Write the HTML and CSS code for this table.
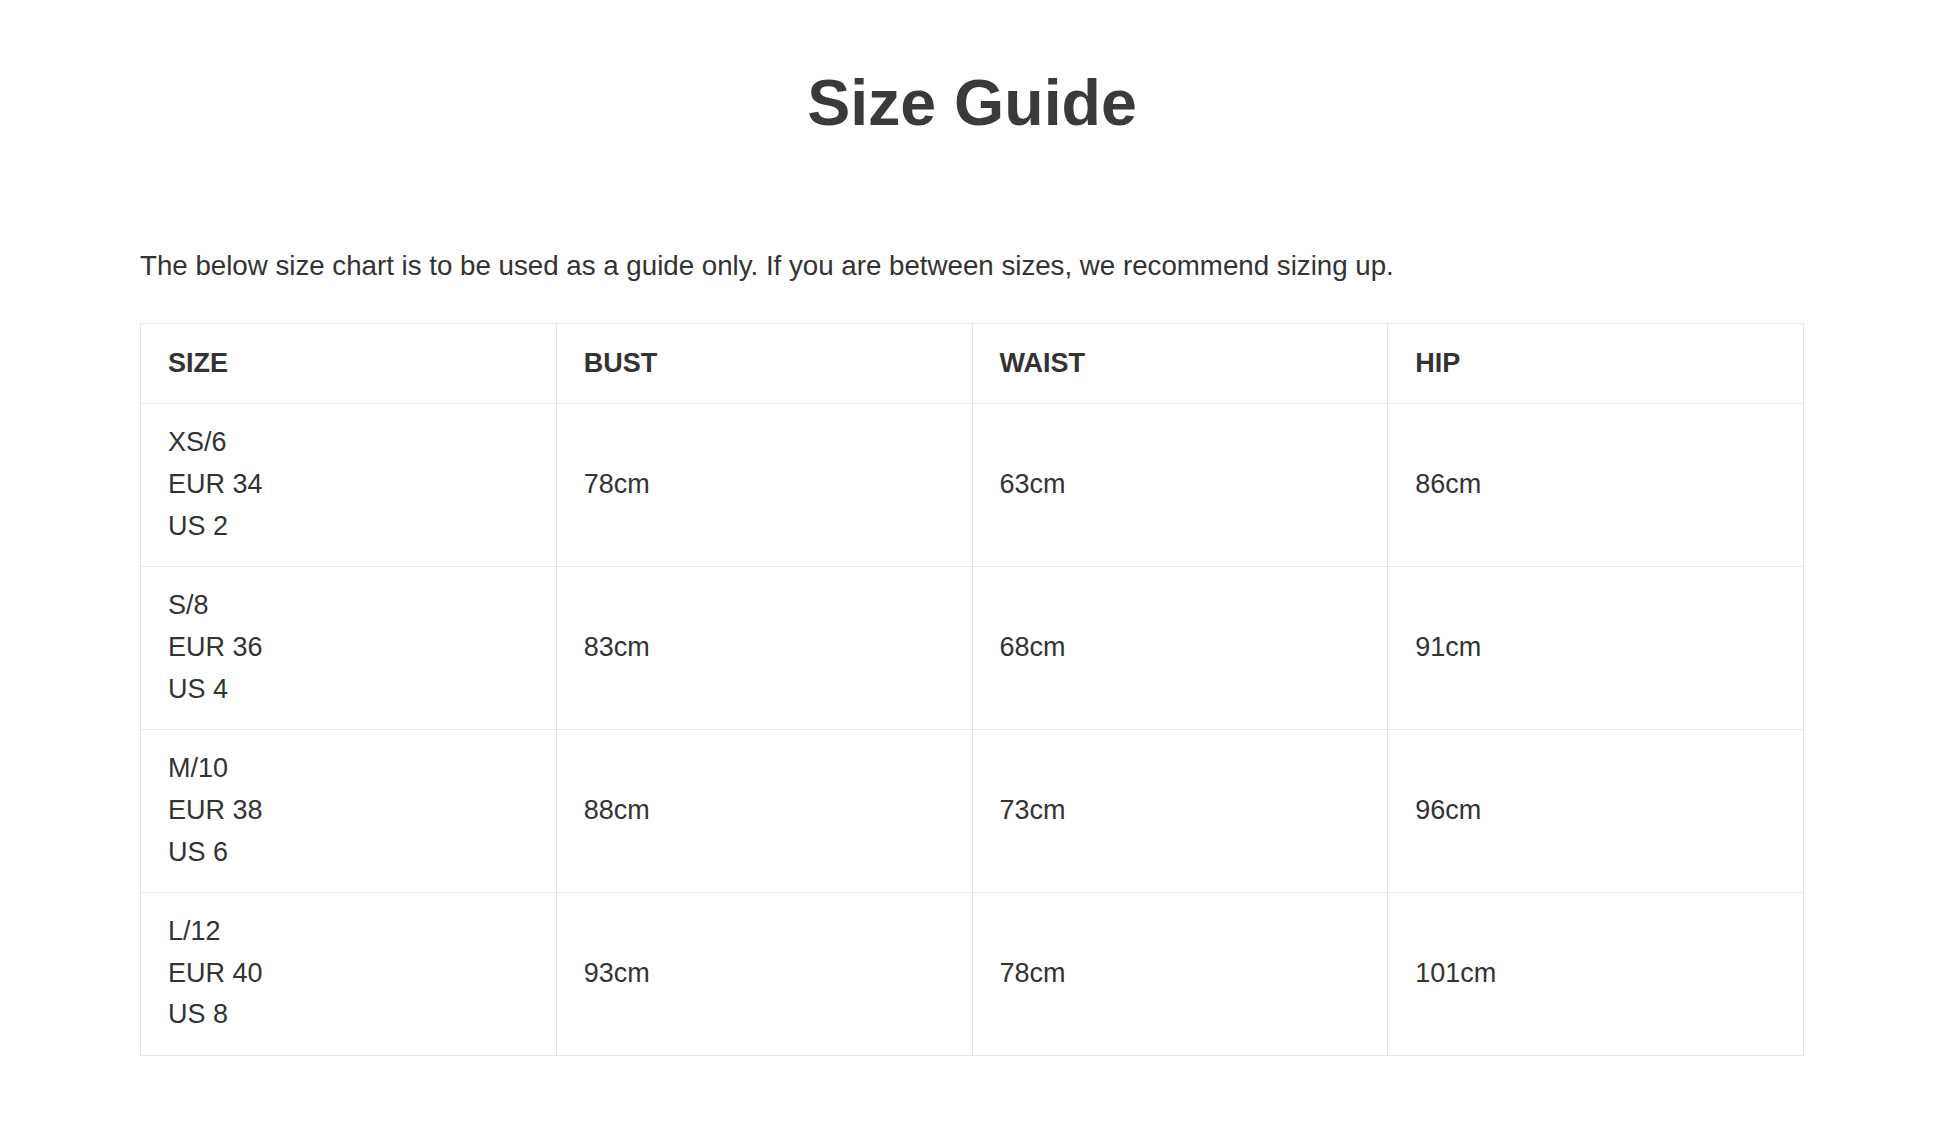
FILE: index.html
```html
<!DOCTYPE html>
<html lang="en">
<head>
<meta charset="utf-8">
<title>Size Guide</title>
<link rel="stylesheet" href="styles.css">
</head>
<body>
<main class="page">
  <h1 class="title">Size Guide</h1>
  <p class="intro">The below size chart is to be used as a guide only. If you are between sizes, we recommend sizing up.</p>
  <table class="chart">
    <thead>
      <tr><th>SIZE</th><th>BUST</th><th>WAIST</th><th>HIP</th></tr>
    </thead>
    <tbody>
      <tr><td>XS/6<br>EUR 34<br>US 2</td><td>78cm</td><td>63cm</td><td>86cm</td></tr>
      <tr><td>S/8<br>EUR 36<br>US 4</td><td>83cm</td><td>68cm</td><td>91cm</td></tr>
      <tr><td>M/10<br>EUR 38<br>US 6</td><td>88cm</td><td>73cm</td><td>96cm</td></tr>
      <tr><td>L/12<br>EUR 40<br>US 8</td><td>93cm</td><td>78cm</td><td>101cm</td></tr>
    </tbody>
  </table>
</main>
</body>
</html>
```
FILE: styles.css
```css
html, body {
  margin: 0;
  padding: 0;
  background: #ffffff;
}
body {
  font-family: "Liberation Sans", Arial, Helvetica, sans-serif;
  color: #333333;
}
.page {
  padding: 65px 142px 40px 140px;
}
.title {
  margin: 0;
  text-align: center;
  font-size: 64.5px;
  line-height: 77px;
  font-weight: 700;
  color: #3a3a3a;
}
.intro {
  margin: 103px 0 36px;
  font-size: 27.7px;
  line-height: 42px;
  color: #333333;
}
.chart {
  width: 100%;
  border-collapse: collapse;
  table-layout: fixed;
  font-size: 27px;
  line-height: 41.6px;
}
.chart th,
.chart td {
  border: 1.5px solid #e6e6e6;
  padding: 18.6px 26px 18.6px 27px;
  text-align: left;
  vertical-align: middle;
}
.chart th {
  font-weight: 700;
  color: #333333;
}
```
